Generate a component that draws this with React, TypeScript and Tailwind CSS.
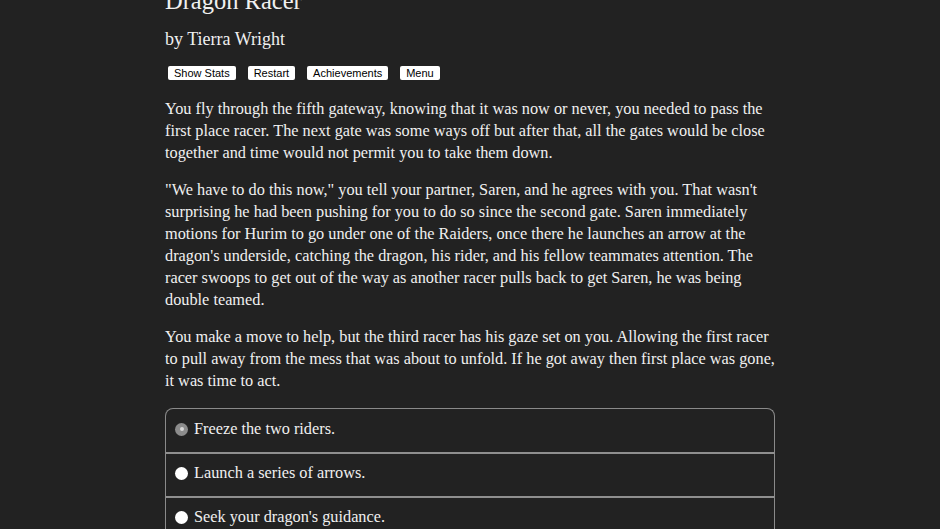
export default function App() {
  const serif = { fontFamily: '"Liberation Serif", serif' };
  return (
    <div className="h-[529px] w-[940px] overflow-hidden bg-[#222222] text-[#f0f0f0]" style={serif}>
      <div className="mx-auto w-[610px] -mt-[17px]">
        <h1 className="text-[24.5px] leading-[36px] font-normal">Dragon Racer</h1>
        <h2 className="mt-[8px] text-[18px] leading-[24px]">by Tierra Wright</h2>
        <div className="mt-[15px] flex gap-3 pl-[3px] font-['Liberation_Sans',sans-serif]">
          {["Show Stats", "Restart", "Achievements", "Menu"].map((b) => (
            <button
              key={b}
              className="h-[14px] rounded-[2px] bg-white px-[6px] text-[11px] leading-[14px] text-black"
            >
              {b}
            </button>
          ))}
        </div>
        <div className="mt-[18px] space-y-[15px] text-[16.3px] leading-[22px]">
          <p>
            You fly through the fifth gateway, knowing that it was now or never, you needed to pass the first
            place racer. The next gate was some ways off but after that, all the gates would be close together
            and time would not permit you to take them down.
          </p>
          <p>
            "We have to do this now," you tell your partner, Saren, and he agrees with you. That wasn't
            surprising he had been pushing for you to do so since the second gate. Saren immediately motions for
            Hurim to go under one of the Raiders, once there he launches an arrow at the dragon's underside,
            catching the dragon, his rider, and his fellow teammates attention. The racer swoops to get out of
            the way as another racer pulls back to get Saren, he was being double teamed.
          </p>
          <p>
            You make a move to help, but the third racer has his gaze set on you. Allowing the first racer to
            pull away from the mess that was about to unfold. If he got away then first place was gone, it was
            time to act.
          </p>
        </div>
        <div className="mt-[16px] overflow-hidden rounded-t-[8px] border border-b-0 border-[#8a8a8a]">
          {[
            { t: "Freeze the two riders.", on: true },
            { t: "Launch a series of arrows.", on: false },
            { t: "Seek your dragon's guidance.", on: false },
          ].map((c, i) => (
            <div
              key={c.t}
              className={`flex items-center gap-[6px] pb-[3px] pl-[9px] text-[16.3px] ${i > 0 ? "h-[44px] border-t-2 border-[#8f8f8f]" : "h-[43px]"}`}
            >
              {c.on ? (
                <span className="flex h-[13px] w-[13px] items-center justify-center rounded-full bg-[#8c8c8c]">
                  <span className="h-[4px] w-[4px] rounded-full bg-[#d8d8d8]" />
                </span>
              ) : (
                <span className="h-[13px] w-[13px] rounded-full bg-white" />
              )}
              <span>{c.t}</span>
            </div>
          ))}
        </div>
      </div>
    </div>
  );
}
